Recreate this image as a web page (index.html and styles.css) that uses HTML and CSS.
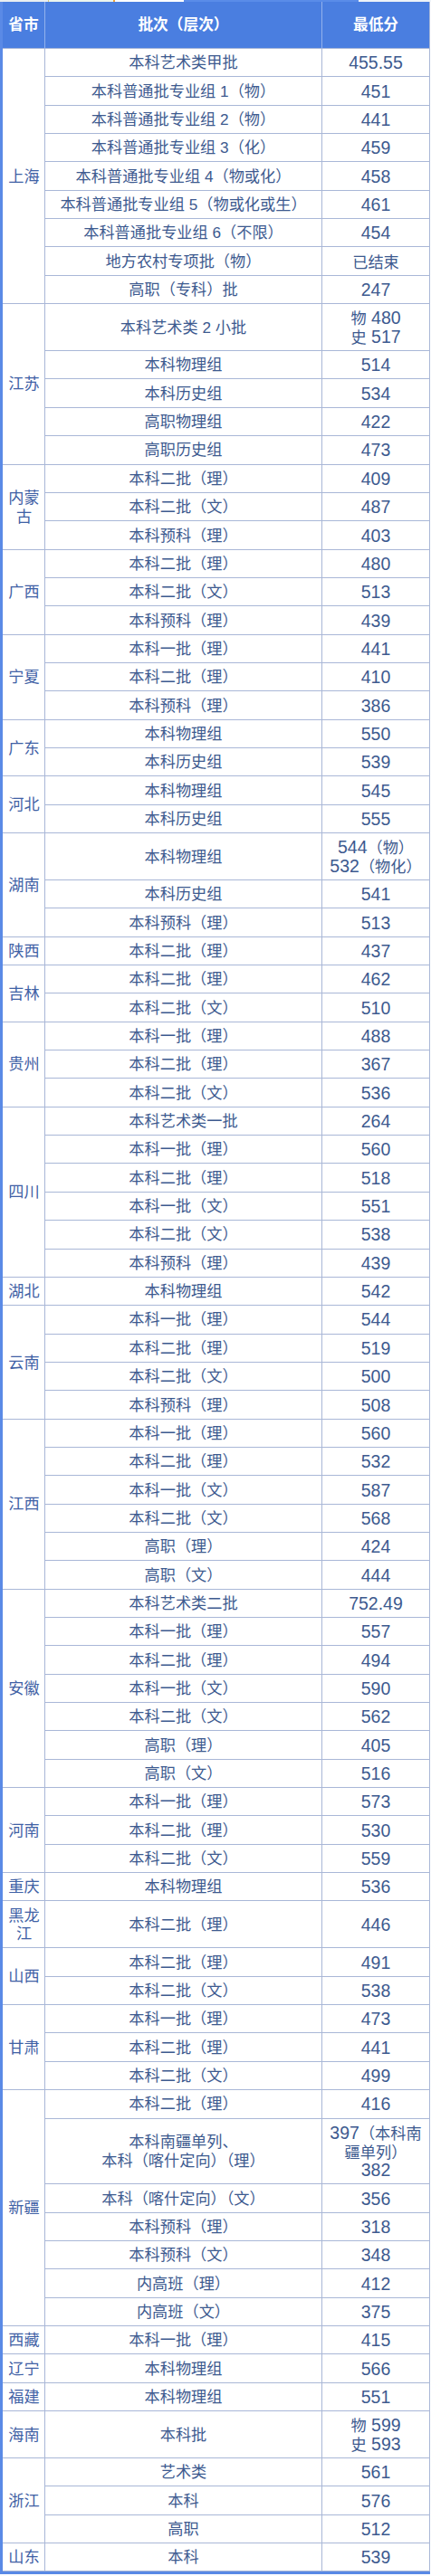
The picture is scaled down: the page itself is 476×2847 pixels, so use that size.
FILE: index.html
```html
<!DOCTYPE html>
<html lang="zh-CN">
<head>
<meta charset="utf-8">
<title>最低分</title>
<link rel="stylesheet" href="styles.css">
</head>
<body>
<div class="strip">
  <span class="s1"></span><span class="s2"></span><span class="s3"></span><span class="s4"></span><span class="s5"></span><span class="s6"></span><span class="s7"></span>
</div>
<table class="scores">
  <thead>
    <tr><th class="c1">省市</th><th class="c2">批次（层次）</th><th class="c3">最低分</th></tr>
  </thead>
  <tbody>
    <tr><td class="prov" rowspan="9">上海</td><td>本科艺术类甲批</td><td class="sc">455.55</td></tr>
    <tr><td>本科普通批专业组 1（物）</td><td class="sc">451</td></tr>
    <tr><td>本科普通批专业组 2（物）</td><td class="sc">441</td></tr>
    <tr><td>本科普通批专业组 3（化）</td><td class="sc">459</td></tr>
    <tr><td>本科普通批专业组 4（物或化）</td><td class="sc">458</td></tr>
    <tr><td>本科普通批专业组 5（物或化或生）</td><td class="sc">461</td></tr>
    <tr><td>本科普通批专业组 6（不限）</td><td class="sc">454</td></tr>
    <tr><td>地方农村专项批（物）</td><td class="sc"><span class="cj">已结束</span></td></tr>
    <tr><td>高职（专科）批</td><td class="sc">247</td></tr>

    <tr><td class="prov" rowspan="5">江苏</td><td>本科艺术类 2 小批</td><td class="sc"><span class="cj">物</span> 480<br><span class="cj">史</span> 517</td></tr>
    <tr><td>本科物理组</td><td class="sc">514</td></tr>
    <tr><td>本科历史组</td><td class="sc">534</td></tr>
    <tr><td>高职物理组</td><td class="sc">422</td></tr>
    <tr><td>高职历史组</td><td class="sc">473</td></tr>

    <tr><td class="prov" rowspan="3">内蒙古</td><td>本科二批（理）</td><td class="sc">409</td></tr>
    <tr><td>本科二批（文）</td><td class="sc">487</td></tr>
    <tr><td>本科预科（理）</td><td class="sc">403</td></tr>

    <tr><td class="prov" rowspan="3">广西</td><td>本科二批（理）</td><td class="sc">480</td></tr>
    <tr><td>本科二批（文）</td><td class="sc">513</td></tr>
    <tr><td>本科预科（理）</td><td class="sc">439</td></tr>

    <tr><td class="prov" rowspan="3">宁夏</td><td>本科一批（理）</td><td class="sc">441</td></tr>
    <tr><td>本科二批（理）</td><td class="sc">410</td></tr>
    <tr><td>本科预科（理）</td><td class="sc">386</td></tr>

    <tr><td class="prov" rowspan="2">广东</td><td>本科物理组</td><td class="sc">550</td></tr>
    <tr><td>本科历史组</td><td class="sc">539</td></tr>

    <tr><td class="prov" rowspan="2">河北</td><td>本科物理组</td><td class="sc">545</td></tr>
    <tr><td>本科历史组</td><td class="sc">555</td></tr>

    <tr><td class="prov" rowspan="3">湖南</td><td>本科物理组</td><td class="sc">544<span class="cj">（物）</span><br>532<span class="cj">（物化）</span></td></tr>
    <tr><td>本科历史组</td><td class="sc">541</td></tr>
    <tr><td>本科预科（理）</td><td class="sc">513</td></tr>

    <tr><td class="prov">陕西</td><td>本科二批（理）</td><td class="sc">437</td></tr>

    <tr><td class="prov" rowspan="2">吉林</td><td>本科二批（理）</td><td class="sc">462</td></tr>
    <tr><td>本科二批（文）</td><td class="sc">510</td></tr>

    <tr><td class="prov" rowspan="3">贵州</td><td>本科一批（理）</td><td class="sc">488</td></tr>
    <tr><td>本科二批（理）</td><td class="sc">367</td></tr>
    <tr><td>本科二批（文）</td><td class="sc">536</td></tr>

    <tr><td class="prov" rowspan="6">四川</td><td>本科艺术类一批</td><td class="sc">264</td></tr>
    <tr><td>本科一批（理）</td><td class="sc">560</td></tr>
    <tr><td>本科二批（理）</td><td class="sc">518</td></tr>
    <tr><td>本科一批（文）</td><td class="sc">551</td></tr>
    <tr><td>本科二批（文）</td><td class="sc">538</td></tr>
    <tr><td>本科预科（理）</td><td class="sc">439</td></tr>

    <tr><td class="prov">湖北</td><td>本科物理组</td><td class="sc">542</td></tr>

    <tr><td class="prov" rowspan="4">云南</td><td>本科一批（理）</td><td class="sc">544</td></tr>
    <tr><td>本科二批（理）</td><td class="sc">519</td></tr>
    <tr><td>本科二批（文）</td><td class="sc">500</td></tr>
    <tr><td>本科预科（理）</td><td class="sc">508</td></tr>

    <tr><td class="prov" rowspan="6">江西</td><td>本科一批（理）</td><td class="sc">560</td></tr>
    <tr><td>本科二批（理）</td><td class="sc">532</td></tr>
    <tr><td>本科一批（文）</td><td class="sc">587</td></tr>
    <tr><td>本科二批（文）</td><td class="sc">568</td></tr>
    <tr><td>高职（理）</td><td class="sc">424</td></tr>
    <tr><td>高职（文）</td><td class="sc">444</td></tr>

    <tr><td class="prov" rowspan="7">安徽</td><td>本科艺术类二批</td><td class="sc">752.49</td></tr>
    <tr><td>本科一批（理）</td><td class="sc">557</td></tr>
    <tr><td>本科二批（理）</td><td class="sc">494</td></tr>
    <tr><td>本科一批（文）</td><td class="sc">590</td></tr>
    <tr><td>本科二批（文）</td><td class="sc">562</td></tr>
    <tr><td>高职（理）</td><td class="sc">405</td></tr>
    <tr><td>高职（文）</td><td class="sc">516</td></tr>

    <tr><td class="prov" rowspan="3">河南</td><td>本科一批（理）</td><td class="sc">573</td></tr>
    <tr><td>本科二批（理）</td><td class="sc">530</td></tr>
    <tr><td>本科二批（文）</td><td class="sc">559</td></tr>

    <tr><td class="prov">重庆</td><td>本科物理组</td><td class="sc">536</td></tr>

    <tr><td class="prov">黑龙江</td><td>本科二批（理）</td><td class="sc">446</td></tr>

    <tr><td class="prov" rowspan="2">山西</td><td>本科二批（理）</td><td class="sc">491</td></tr>
    <tr><td>本科二批（文）</td><td class="sc">538</td></tr>

    <tr><td class="prov" rowspan="3">甘肃</td><td>本科一批（理）</td><td class="sc">473</td></tr>
    <tr><td>本科二批（理）</td><td class="sc">441</td></tr>
    <tr><td>本科二批（文）</td><td class="sc">499</td></tr>

    <tr><td class="prov" rowspan="7">新疆</td><td>本科二批（理）</td><td class="sc">416</td></tr>
    <tr><td>本科南疆单列、<br>本科（喀什定向）（理）</td><td class="sc">397<span class="cj">（本科南<br>疆单列）</span><br>382</td></tr>
    <tr><td>本科（喀什定向）（文）</td><td class="sc">356</td></tr>
    <tr><td>本科预科（理）</td><td class="sc">318</td></tr>
    <tr><td>本科预科（文）</td><td class="sc">348</td></tr>
    <tr><td>内高班（理）</td><td class="sc">412</td></tr>
    <tr><td>内高班（文）</td><td class="sc">375</td></tr>

    <tr><td class="prov">西藏</td><td>本科一批（理）</td><td class="sc">415</td></tr>
    <tr><td class="prov">辽宁</td><td>本科物理组</td><td class="sc">566</td></tr>
    <tr><td class="prov">福建</td><td>本科物理组</td><td class="sc">551</td></tr>
    <tr><td class="prov">海南</td><td>本科批</td><td class="sc"><span class="cj">物</span> 599<br><span class="cj">史</span> 593</td></tr>

    <tr><td class="prov" rowspan="3">浙江</td><td>艺术类</td><td class="sc">561</td></tr>
    <tr><td>本科</td><td class="sc">576</td></tr>
    <tr><td>高职</td><td class="sc">512</td></tr>

    <tr><td class="prov">山东</td><td>本科</td><td class="sc">539</td></tr>
  </tbody>
</table>
</body>
</html>
```

FILE: styles.css
```css
html, body {
  margin: 0;
  padding: 0;
  background: #ffffff;
}

body {
  width: 476px;
  font-family: "Liberation Sans", "Noto Sans CJK SC", sans-serif;
}

.strip {
  display: flex;
  height: 2px;
  width: 476px;
}
.strip span { display: block; height: 2px; }
.strip .s1 { width: 53px; background: #e9eef1; }
.strip .s2 { width: 1px; background: #d8c77a; }
.strip .s3 { width: 71px; background: #ebf5ee; }
.strip .s4 { width: 2px; background: #f0a23a; }
.strip .s5 { width: 76px; background: #ffffff; }
.strip .s6 { width: 193px; background: #5a8ce8; }
.strip .s7 { flex: 1; background: #eef3f8; }

.scores {
  border-collapse: separate;
  border-spacing: 0;
  table-layout: fixed;
  width: 475px;
  border-left: 3px solid #5a8ae6;
  border-bottom: 3px solid #5a8ae6;
}

.scores th,
.scores td {
  box-sizing: border-box;
  text-align: center;
  vertical-align: middle;
}

.scores th {
  background: #4a7ee0;
  color: #ffffff;
  font-weight: bold;
  font-size: 16.7px;
  line-height: 51px;
  padding: 0;
  border-right: 1px solid #93b1ec;
  border-bottom: 1px solid #a9b7d7;
}
.scores th.c1 { width: 47px; }
.scores th.c2 { width: 306px; }
.scores th.c3 { width: 119px; border-right-color: #a9b7d7; }

.scores td {
  font-size: 17.2px;
  line-height: 20.7px;
  padding: 5.3px 4px 4.35px;
  color: #3d5a8f;
  border-right: 1px solid #a9b7d7;
  border-bottom: 1px solid #a9b7d7;
}

.scores td.prov {
  color: #3f61a5;
  padding-left: 5px;
  padding-right: 4px;
}

.scores td.sc {
  font-size: 19.5px;
}

.scores td.sc .cj {
  font-size: 17.2px;
  line-height: 1;
}
```
